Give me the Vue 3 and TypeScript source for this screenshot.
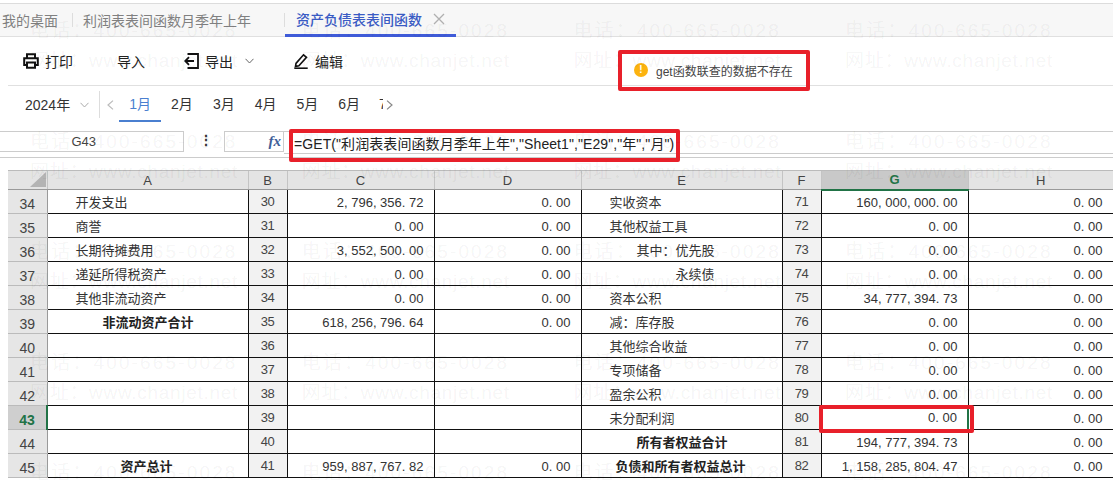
<script setup lang="ts">
interface Row {
  n: number
  a: string
  aPad: number
  aBold?: boolean
  b: number
  c: string
  d: string
  e: string
  ePad: number
  eBold?: boolean
  f: number
  g: string
  h: string
}

const columns = ['A', 'B', 'C', 'D', 'E', 'F', 'G', 'H']
const months = ['1月', '2月', '3月', '4月', '5月', '6月']

const rows: Row[] = [
  { n: 34, a: '开发支出', aPad: 28, b: 30, c: '2, 796, 356. 72', d: '0. 00', e: '实收资本', ePad: 28, f: 71, g: '160, 000, 000. 00', h: '0. 00' },
  { n: 35, a: '商誉', aPad: 28, b: 31, c: '0. 00', d: '0. 00', e: '其他权益工具', ePad: 28, f: 72, g: '0. 00', h: '0. 00' },
  { n: 36, a: '长期待摊费用', aPad: 28, b: 32, c: '3, 552, 500. 00', d: '0. 00', e: '其中：优先股', ePad: 55, f: 73, g: '0. 00', h: '0. 00' },
  { n: 37, a: '递延所得税资产', aPad: 28, b: 33, c: '0. 00', d: '0. 00', e: '永续债', ePad: 94, f: 74, g: '0. 00', h: '0. 00' },
  { n: 38, a: '其他非流动资产', aPad: 28, b: 34, c: '0. 00', d: '0. 00', e: '资本公积', ePad: 28, f: 75, g: '34, 777, 394. 73', h: '0. 00' },
  { n: 39, a: '非流动资产合计', aPad: 55, aBold: true, b: 35, c: '618, 256, 796. 64', d: '0. 00', e: '减：库存股', ePad: 28, f: 76, g: '0. 00', h: '0. 00' },
  { n: 40, a: '', aPad: 28, b: 36, c: '', d: '', e: '其他综合收益', ePad: 28, f: 77, g: '0. 00', h: '0. 00' },
  { n: 41, a: '', aPad: 28, b: 37, c: '', d: '', e: '专项储备', ePad: 28, f: 78, g: '0. 00', h: '0. 00' },
  { n: 42, a: '', aPad: 28, b: 38, c: '', d: '', e: '盈余公积', ePad: 28, f: 79, g: '0. 00', h: '0. 00' },
  { n: 43, a: '', aPad: 28, b: 39, c: '', d: '', e: '未分配利润', ePad: 28, f: 80, g: '0. 00', h: '0. 00' },
  { n: 44, a: '', aPad: 28, b: 40, c: '', d: '', e: '所有者权益合计', ePad: 55, eBold: true, f: 81, g: '194, 777, 394. 73', h: '0. 00' },
  { n: 45, a: '资产总计', aPad: 73, aBold: true, b: 41, c: '959, 887, 767. 82', d: '0. 00', e: '负债和所有者权益总计', ePad: 34, eBold: true, f: 82, g: '1, 158, 285, 804. 47', h: '0. 00' }
]

const watermarkCells = Array.from({ length: 20 }, (_, i) => i)
</script>

<template>
  <div class="page">
    <div class="tabs">
      <span class="tab first">我的桌面</span>
      <i class="tab-sep"></i>
      <span class="tab second">利润表表间函数月季年上年</span>
      <i class="tab-sep"></i>
      <span class="tab active">
        资产负债表表间函数
        <svg class="close" width="12" height="12" viewBox="0 0 12 12" fill="none" stroke="#b0b0b0" stroke-width="1.3">
          <path d="M1 1l10 10M11 1 1 11" />
        </svg>
      </span>
    </div>

    <div class="toolbar">
      <span class="tool print">
        <svg width="16" height="16" viewBox="0 0 16 16" fill="none" stroke="#111" stroke-width="2">
          <path d="M4 5V1.2h8V5" />
          <path d="M4 12H1.2V5.2h13.6V12H12" />
          <path d="M4 9.5h8v5.3H4z" />
        </svg>
        打印
      </span>
      <span class="tool import">导入</span>
      <span class="tool export">
        <svg width="15" height="16" viewBox="0 0 15 16" fill="none" stroke="#111" stroke-width="1.8">
          <path d="M3.5 1H14v14H3.5" />
          <path d="M1 8h9M5 4.2 1.2 8 5 11.8" />
        </svg>
        导出
        <svg class="chev" width="9" height="6" viewBox="0 0 9 6" fill="none" stroke="#666" stroke-width="1">
          <path d="M.5.8 4.5 5 8.5.8" />
        </svg>
      </span>
      <span class="tool edit">
        <svg width="14" height="16" viewBox="0 0 14 16" fill="none" stroke="#111" stroke-width="1.6">
          <path d="M2 10.4 9.5 1.8l3 2.6-7.6 8.4-3.4.6z" />
          <path d="M.3 15.2h13.4" />
        </svg>
        编辑
      </span>
    </div>

    <div class="periods">
      <span class="year">2024年</span>
      <svg class="year-chev" width="9" height="6" viewBox="0 0 9 6" fill="none" stroke="#aaa" stroke-width="1">
        <path d="M.5.8 4.5 5 8.5.8" />
      </svg>
      <i class="period-sep"></i>
      <svg class="arrow-left" width="7" height="10" viewBox="0 0 7 10" fill="none" stroke="#bbb" stroke-width="1.2">
        <path d="M6 .6 1 5l5 4.4" />
      </svg>
      <div class="months">
        <span v-for="(m, i) in months" :key="m" class="month" :class="{ on: i === 0 }">{{ m }}</span>
        <span class="month-cut">7</span>
      </div>
      <svg class="arrow-right" width="7" height="10" viewBox="0 0 7 10" fill="none" stroke="#888" stroke-width="1.2">
        <path d="M1 .6 6 5 1 9.4" />
      </svg>
    </div>

    <div class="formula">
      <div class="cell-name">G43</div>
      <div class="dots">⋮</div>
      <div class="fx-box"><span class="fx">fx</span></div>
      <div class="formula-input">=GET("利润表表间函数月季年上年","Sheet1","E29","年","月")</div>
    </div>

    <div class="splitter"><i></i></div>

    <table class="sheet">
      <colgroup>
        <col class="c-head" />
        <col class="c-a" />
        <col class="c-b" />
        <col class="c-c" />
        <col class="c-c" />
        <col class="c-a" />
        <col class="c-b" />
        <col class="c-c" />
        <col class="c-h" />
      </colgroup>
      <thead>
        <tr>
          <th class="corner"><i></i></th>
          <th v-for="c in columns" :key="c" :class="{ 'col-on': c === 'G' }">{{ c }}</th>
        </tr>
      </thead>
      <tbody>
        <tr v-for="r in rows" :key="r.n">
          <th class="row-head" :class="{ 'row-on': r.n === 43 }">{{ r.n }}</th>
          <td class="left" :class="{ bold: r.aBold }" :style="{ paddingLeft: r.aPad + 'px' }">{{ r.a }}</td>
          <td class="seq">{{ r.b }}</td>
          <td class="num">{{ r.c }}</td>
          <td class="num">{{ r.d }}</td>
          <td class="left" :class="{ bold: r.eBold }" :style="{ paddingLeft: r.ePad + 'px' }">{{ r.e }}</td>
          <td class="seq">{{ r.f }}</td>
          <td class="num" :class="{ selected: r.n === 43 }">{{ r.g }}</td>
          <td class="num">{{ r.h }}</td>
        </tr>
      </tbody>
    </table>

    <div class="message">
      <span class="warn">!</span>
      <span>get函数联查的数据不存在</span>
    </div>

    <div class="mark mark-msg"></div>
    <div class="mark mark-formula"></div>
    <div class="mark mark-cell"></div>

    <div class="watermarks">
      <div v-for="i in watermarkCells" :key="i" class="wm">
        <span class="wm-tel">电话：400-665-0028</span>
        <span v-if="i < 16" class="wm-web">网址：www.chanjet.net</span>
      </div>
    </div>
  </div>
</template>

<style>
html,
body {
  margin: 0;
  background: #fff;
  overflow: hidden;
}
</style>

<style scoped>
.page {
  position: relative;
  width: 1113px;
  height: 480px;
  overflow: hidden;
  background: #fff;
  color: #222;
  font-family: "Liberation Sans", "Noto Sans CJK SC", sans-serif;
  font-size: 14px;
}
.tabs {
  display: flex;
  align-items: center;
  box-sizing: border-box;
  height: 34px;
  margin-top: 3px;
  border-top: 1px solid #dcdcdc;
  border-bottom: 1px solid #e0e0e0;
  background: #f7f7f7;
  color: #808080;
}
.tab-sep {
  width: 1px;
  height: 14px;
  background: #ddd;
}
.tab.first {
  margin-left: 2px;
  margin-right: 14px;
}
.tab.second {
  margin-left: 10px;
  margin-right: 33px;
  width: 168px;
}
.tab.active {
  display: flex;
  align-items: center;
  box-sizing: border-box;
  width: 171px;
  height: 33px;
  padding-left: 11px;
  border-bottom: 3px solid #3f5bd8;
  color: #3a5bc4;
  font-weight: 500;
}
.close {
  margin-left: 11px;
}
.toolbar {
  position: relative;
  display: flex;
  align-items: center;
  box-sizing: border-box;
  height: 49px;
  margin-left: 8px;
  border-bottom: 1px solid #e0e0e0;
  color: #222;
}
.tool {
  display: flex;
  align-items: center;
  gap: 6px;
}
.print {
  margin-left: 15px;
}
.import {
  margin-left: 44px;
}
.export {
  margin-left: 39px;
}
.chev {
  margin-left: 6px;
}
.edit {
  margin-left: 40px;
  gap: 7px;
}
.periods {
  display: flex;
  align-items: center;
  height: 37px;
  color: #333;
}
.year {
  margin-left: 25px;
  margin-bottom: 2px;
}
.year-chev {
  margin-left: 10px;
}
.period-sep {
  width: 1px;
  height: 27px;
  margin-left: 10px;
  background: #ddd;
}
.arrow-left {
  margin-left: 7px;
}
.months {
  display: flex;
  width: 274px;
  height: 37px;
  margin-left: 5px;
  overflow: hidden;
}
.month {
  box-sizing: border-box;
  flex: 0 0 42px;
  height: 35px;
  margin-right: -0.2px;
  text-align: center;
  line-height: 36px;
}
.month.on {
  height: 36px;
  border-bottom: 2px solid #4a7fd0;
  color: #4a7fd0;
}
.month-cut {
  width: 4px;
  margin-left: 9px;
  overflow: hidden;
  line-height: 36px;
}
.arrow-right {
  margin-left: -7px;
}
.formula {
  position: relative;
  display: flex;
  align-items: stretch;
  box-sizing: border-box;
  height: 27px;
  padding-bottom: 3px;
  border-bottom: 1px solid #ccc;
  margin-top: 8px;
}
.cell-name {
  box-sizing: border-box;
  width: 184px;
  height: 21px;
  border: 1px solid #ccc;
  border-left: 0;
  padding-right: 87px;
  text-align: right;
  line-height: 19px;
  font-size: 13px;
  color: #444;
}
.dots {
  box-sizing: border-box;
  width: 40px;
  padding-left: 4px;
  line-height: 19px;
  text-align: center;
  font-weight: 700;
  color: #333;
}
.fx-box {
  box-sizing: border-box;
  width: 60px;
  height: 21px;
  border: 1px solid #ccc;
  text-align: right;
  padding-right: 2px;
}
.fx {
  font-family: "Liberation Serif", serif;
  font-style: italic;
  font-weight: 700;
  color: #3f5f9a;
  font-size: 15px;
  line-height: 19px;
}
.formula-input {
  flex: 1;
  height: 23px;
  box-sizing: border-box;
  border-top: 1px solid #ccc;
  border-bottom: 1px solid #ccc;
  padding-left: 10px;
  line-height: 24px;
  color: #222;
  font-size: 14px;
  letter-spacing: 0.08px;
}
.splitter {
  display: flex;
  justify-content: flex-end;
  height: 12px;
  padding-right: 388px;
  align-items: center;
}
.splitter i {
  display: block;
  width: 23px;
  height: 4px;
  background-image: radial-gradient(#666 0.6px, transparent 0.7px);
  background-size: 2px 2px;
}
.sheet {
  table-layout: fixed;
  width: 1105px;
  margin-left: 8px;
  border-collapse: collapse;
  font-size: 13px;
  color: #333;
}
.c-head {
  width: 39px;
}
.c-a {
  width: 201px;
}
.c-b {
  width: 39px;
}
.c-c {
  width: 147px;
}
.c-h {
  width: 145px;
}
thead th {
  box-sizing: border-box;
  height: 19px;
  padding: 0;
  background: #e4e4e4;
  border-top: 1px solid #bbb;
  border-left: 1px solid #c4c4c4;
  border-bottom: 1px solid #9a9a9a;
  font-weight: 400;
  font-size: 13px;
  color: #444;
}
thead th.col-on {
  background: #c9c9c9;
  color: #217346;
  border-bottom: 2px solid #217346;
  font-weight: 700;
}
.corner {
  position: relative;
  border-left: 0;
}
.corner i {
  position: absolute;
  right: 1px;
  bottom: 2px;
  width: 0;
  height: 0;
  border-left: 16px solid transparent;
  border-bottom: 15px solid #b4b4b4;
}
tbody tr {
  height: 24px;
}
tbody td,
tbody th {
  padding: 0;
  box-sizing: border-box;
  border: 1px solid #111;
  height: 24px;
  white-space: nowrap;
  overflow: hidden;
}
tbody th.row-head {
  background: #e6e6e6;
  border: 0;
  border-bottom: 1px solid #bbb;
  border-right: 1px solid #9a9a9a;
  padding-top: 4px;
  font-weight: 400;
  font-size: 14px;
  color: #444;
}
tbody th.row-on {
  background: #cfcfcf;
  color: #217346;
  border-right: 2px solid #217346;
  font-weight: 700;
}
.left {
  text-align: left;
}
.bold {
  font-weight: 700;
  color: #222;
}
.seq {
  background: #f2f2f2;
  text-align: center;
  font-size: 13px;
  letter-spacing: -0.4px;
  color: #444;
}
tbody td.num {
  text-align: right;
  padding-right: 10px;
  padding-top: 1px;
  font-size: 13px;
}
tbody td.selected {
  border-right: 2px solid #217346;
  border-bottom: 2px solid #217346;
}
.message {
  position: absolute;
  left: 621px;
  top: 53px;
  width: 186px;
  height: 34px;
  display: flex;
  align-items: center;
  gap: 8px;
  padding-left: 13px;
  box-sizing: border-box;
  font-size: 12px;
  color: #444;
}
.warn {
  width: 14px;
  height: 14px;
  border-radius: 50%;
  background: #fcb30f;
  color: #fff;
  font-size: 10px;
  font-weight: 700;
  text-align: center;
  line-height: 14px;
}
.mark {
  position: absolute;
  box-sizing: border-box;
  border: 4px solid #e8202a;
  border-radius: 2px;
  pointer-events: none;
}
.mark-msg {
  left: 618px;
  top: 50px;
  width: 192px;
  height: 41px;
}
.mark-formula {
  left: 289px;
  top: 129px;
  width: 391px;
  height: 33px;
}
.mark-cell {
  left: 819px;
  top: 405px;
  width: 155px;
  height: 28px;
}
.watermarks {
  position: absolute;
  left: 30px;
  top: 19px;
  display: grid;
  grid-template-columns: repeat(4, 271.7px);
  grid-auto-rows: 110.5px;
  pointer-events: none;
  color: rgba(0, 0, 0, 0.055);
  font-size: 19px;
  line-height: 24px;
}
.wm {
  display: flex;
  flex-direction: column;
  gap: 6px;
  white-space: nowrap;
}
.wm-tel {
  letter-spacing: 2.15px;
}
.wm-web {
  letter-spacing: 0.7px;
}
</style>
